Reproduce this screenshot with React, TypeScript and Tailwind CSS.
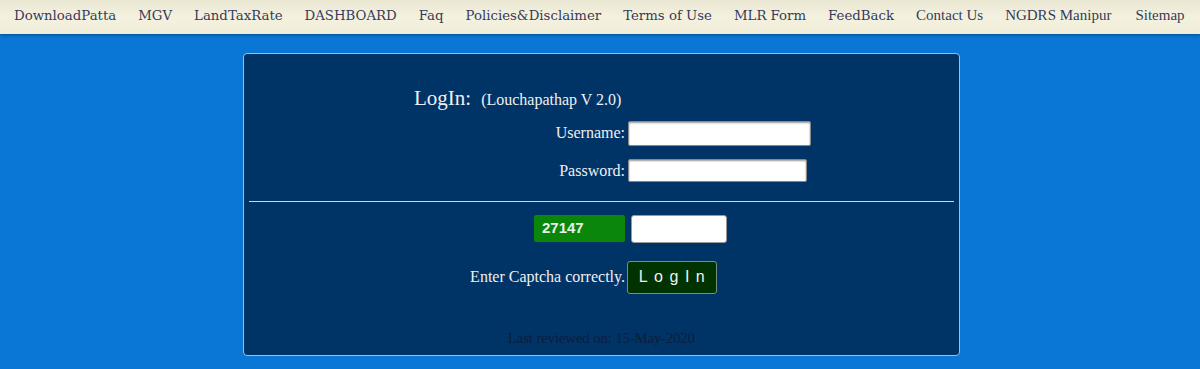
import React from "react";

const navA = ["DownloadPatta", "MGV", "LandTaxRate", "DASHBOARD", "Faq", "Policies&Disclaimer", "Terms of Use", "MLR Form", "FeedBack"];
const navB = ["Contact Us", "NGDRS Manipur", "Sitemap"];

export default function App() {
  return (
    <div className="w-[1200px] h-[369px] bg-[#0a76d6] overflow-hidden">
      <div className="h-[34px] pb-[3px] bg-gradient-to-b from-[#e9e7d2] via-[#f4f2df] to-[#efedd8] shadow-[0_1px_3px_rgba(0,0,0,0.35)] flex items-center pl-[14px] gap-[22px] text-[#363b5b]">
        {navA.map((n) => (
          <a key={n} className="font-['DejaVu_Serif',serif] text-[13.3px] leading-none whitespace-nowrap">
            {n}
          </a>
        ))}
        {navB.map((n, i) => (
          <a key={n} className={"font-['Liberation_Serif',serif] text-[15px] leading-none whitespace-nowrap " + (i === 2 ? "ml-[2px]" : "")}>
            {n}
          </a>
        ))}
      </div>

      <div className="pt-[19px] pl-[243px]">
        <div className="w-[717px] h-[303px] bg-[#003366] border border-[#8fc3ee] rounded-[4px] font-['Liberation_Serif',serif] text-[#f0f0f0] flex flex-col">
          <div className="flex items-baseline pl-[170px] pt-[29px]">
            <span className="text-[21px]">LogIn:</span>
            <span className="text-[16px] ml-[10px]">(Louchapathap V 2.0)</span>
          </div>
          <div className="flex items-center mt-[6px]">
            <span className="w-[381px] text-right text-[16px]">Username:</span>
            <input className="ml-[3px] w-[183px] h-[25px] bg-white rounded-[2px] border border-[#888] shadow-[inset_0_1px_2px_rgba(0,0,0,0.4)]" />
          </div>
          <div className="flex items-center mt-[13px]">
            <span className="w-[381px] text-right text-[16px]">Password:</span>
            <input type="password" className="ml-[3px] w-[179px] h-[23px] bg-white rounded-[2px] border border-[#888] shadow-[inset_0_1px_2px_rgba(0,0,0,0.4)]" />
          </div>
          <div className="mx-[5px] mt-[18px] h-px bg-[#c8d8e8]" />
          <div className="flex items-center mt-[13px] pl-[290px] gap-[6px]">
            <div className="w-[91px] h-[27px] bg-[#0a860a] rounded-[2px] flex items-center pl-[8px] font-['Liberation_Sans',sans-serif] font-bold text-[15px] text-[#e8f2e8]">
              27147
            </div>
            <input className="w-[96px] h-[28px] bg-white rounded-[3px] border border-[#999]" />
          </div>
          <div className="flex items-center mt-[18px]">
            <span className="w-[381px] text-right text-[16px]">Enter Captcha correctly.</span>
            <button className="ml-[2px] w-[90px] h-[33px] bg-[#003300] border border-[#7a8f7a] rounded-[3px] font-['Liberation_Sans',sans-serif] text-[16px] tracking-[6.5px] text-[#eef2ee] pl-[6px]">
              LogIn
            </button>
          </div>
          <div className="mt-auto mb-[5px] text-center text-[14.5px] text-[#0d1e3a]">
            Last reviewed on: 15-May-2020
          </div>
        </div>
      </div>
    </div>
  );
}
